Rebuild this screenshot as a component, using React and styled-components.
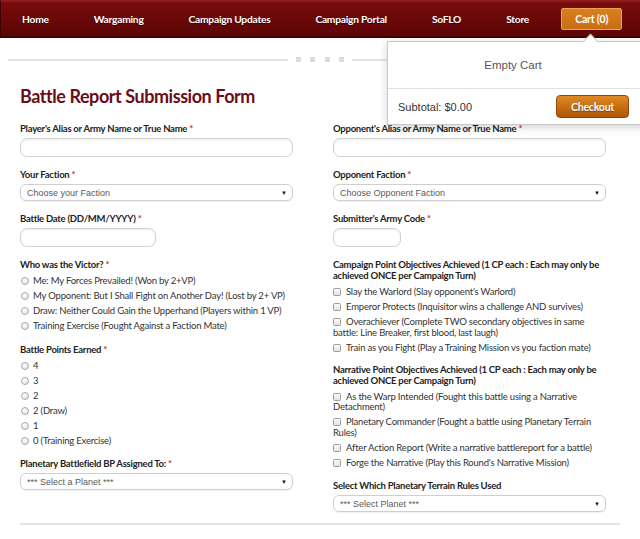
import React from "react";
import styled, { createGlobalStyle } from "styled-components";

const GlobalStyle = createGlobalStyle`
  html, body { margin: 0; padding: 0; background: #fff; }
  body { font-family: Lato, "Open Sans", sans-serif; color: #222; }
  * { box-sizing: border-box; }
`;

const navItems = ["Home", "Wargaming", "Campaign Updates", "Campaign Portal", "SoFLO", "Store"];

const victorOptions = [
  "Me: My Forces Prevailed! (Won by 2+VP)",
  "My Opponent: But I Shall Fight on Another Day! (Lost by 2+ VP)",
  "Draw: Neither Could Gain the Upperhand (Players within 1 VP)",
  "Training Exercise (Fought Against a Faction Mate)",
];

const pointOptions = ["4", "3", "2", "2 (Draw)", "1", "0 (Training Exercise)"];

const campaignObjectives = [
  "Slay the Warlord (Slay opponent's Warlord)",
  "Emperor Protects (Inquisitor wins a challenge AND survives)",
  "Overachiever (Complete TWO secondary objectives in same battle: Line Breaker, first blood, last laugh)",
  "Train as you Fight (Play a Training Mission vs you faction mate)",
];

const narrativeObjectives = [
  "As the Warp Intended (Fought this battle using a Narrative Detachment)",
  "Planetary Commander (Fought a battle using Planetary Terrain Rules)",
  "After Action Report (Write a narrative battlereport for a battle)",
  "Forge the Narrative (Play this Round's Narrative Mission)",
];

const Page = styled.div`
  position: relative;
  width: 640px;
  min-height: 539px;
  overflow: hidden;
`;

const NavBar = styled.nav`
  display: flex;
  align-items: center;
  height: 38px;
  padding-left: 21px;
  gap: 45px;
  background: linear-gradient(#7a0c0c, #680808 55%, #5c0505);
  border-top: 2px solid #8c1c1c;
  border-bottom: 2px solid #400202;
  border-left: 1px solid #3a0202;
`;

const NavLink = styled.a`
  color: #fff;
  font-weight: 700;
  font-size: 10.25px;
  letter-spacing: -0.25px;
  white-space: nowrap;
  text-decoration: none;
  text-shadow: 0 1px 1px rgba(0, 0, 0, 0.4);
`;

const CartButton = styled.a`
  display: flex;
  align-items: center;
  justify-content: center;
  flex-shrink: 0;
  height: 22px;
  width: 61px;
  margin-left: -13px;
  color: #fff;
  font-weight: 700;
  font-size: 10.5px;
  letter-spacing: -0.2px;
  white-space: nowrap;
  text-decoration: none;
  background: linear-gradient(#d9801f, #c96d13);
  border: 1px solid #e9a257;
  border-radius: 2px;
`;

const Divider = styled.div`
  display: flex;
  align-items: center;
  gap: 8px;
  margin-top: 19px;
  padding: 0 8px;
`;

const DividerLine = styled.div`
  flex: 1;
  height: 2px;
  background: #e2e2e2;
`;

const Squares = styled.div`
  display: flex;
  gap: 9.5px;
`;

const Square = styled.span`
  width: 5px;
  height: 5px;
  background: #dcdcdc;
`;

const CartPopup = styled.div`
  position: absolute;
  top: 41px;
  left: 387px;
  width: 264px;
  background: #fff;
  border: 1px solid #c8c8c8;
  box-shadow: 0 2px 8px rgba(0, 0, 0, 0.18);

  &::before {
    content: "";
    position: absolute;
    top: -6px;
    left: 197px;
    width: 10px;
    height: 10px;
    background: #fff;
    border-left: 1px solid #c8c8c8;
    border-top: 1px solid #c8c8c8;
    transform: rotate(45deg);
  }
`;

const CartEmpty = styled.div`
  display: flex;
  align-items: center;
  justify-content: center;
  height: 46px;
  padding-right: 12px;
  font-family: "Liberation Sans", Arial, sans-serif;
  font-size: 11.5px;
  color: #555;
`;

const CartFooter = styled.div`
  display: flex;
  align-items: center;
  justify-content: space-between;
  height: 36px;
  padding: 0 21px 0 10px;
  border-top: 1px solid #e0e0e0;
  font-family: "Liberation Sans", Arial, sans-serif;
  font-size: 11px;
  color: #333;
`;

const CheckoutButton = styled.button`
  width: 73px;
  height: 23px;
  padding: 0;
  color: #fff;
  font-family: Lato, sans-serif;
  font-weight: 700;
  font-size: 10.5px;
  letter-spacing: -0.2px;
  background: linear-gradient(#e08a24, #c56c12 55%, #ad5708);
  border: 1px solid #94460a;
  border-radius: 4px;
  text-shadow: 0 1px 1px rgba(0, 0, 0, 0.35);
`;

const Main = styled.main`
  padding: 0 20px;
`;

const Title = styled.h1`
  margin: 22px 0 15px;
  font-size: 18px;
  line-height: 24px;
  font-weight: 700;
  color: #6b0d18;
  letter-spacing: -0.45px;
`;

const FormGrid = styled.form`
  display: grid;
  grid-template-columns: 273px 273px;
  column-gap: 40px;
  align-items: start;
`;

const Column = styled.div`
  display: flex;
  flex-direction: column;
`;

const Field = styled.div`
  margin-bottom: ${(p) => (p.$last ? 0 : p.$gap ?? 12)}px;
`;

const Label = styled.div`
  margin-bottom: 4px;
  font-size: 9.5px;
  line-height: 11px;
  font-weight: 700;
  letter-spacing: -0.25px;
  color: #222;
`;

const Required = styled.span`
  color: #c0392b;
`;

const TextInput = styled.input`
  display: block;
  width: ${(p) => p.$w || 273}px;
  height: 19px;
  border: 1px solid #d2d2d2;
  border-radius: 7px;
  box-shadow: inset 0 1px 2px rgba(0, 0, 0, 0.07);
  background: #fff;
`;

const SelectBox = styled.div`
  display: flex;
  align-items: center;
  justify-content: space-between;
  width: 273px;
  height: 17px;
  padding: 0 5px 0 6px;
  border: 1px solid #cfcfcf;
  border-radius: 6px;
  box-shadow: 0 1px 1px rgba(0, 0, 0, 0.06);
  font-family: "Liberation Sans", Arial, sans-serif;
  font-size: 9px;
  color: #5a5a5a;
`;

const Arrow = styled.span`
  font-size: 6px;
  color: #111;
`;

const OptionList = styled.div`
  display: flex;
  flex-direction: column;
  gap: 4.5px;
  padding-top: 2px;
`;

const Option = styled.label`
  display: block;
  font-size: 9.5px;
  line-height: 10.5px;
  letter-spacing: -0.2px;
  color: #333;
`;

const Radio = styled.span`
  display: inline-block;
  width: 8px;
  height: 8px;
  margin: 0 4px 0 1px;
  vertical-align: -1px;
  border: 1px solid #aaa;
  border-radius: 50%;
  background: radial-gradient(circle at 40% 35%, #fff, #dcdcdc);
`;

const Check = styled.span`
  display: inline-block;
  width: 8px;
  height: 8px;
  margin-right: 5px;
  vertical-align: -1px;
  border: 1px solid #9c9c9c;
  border-radius: 1.5px;
  background: linear-gradient(#fbfbfb, #e2e2e2);
`;

const BottomRule = styled.hr`
  margin: 11px 0 0;
  border: 0;
  height: 2px;
  background: #e2e2e2;
`;

const Select = ({ text }) => (
  <SelectBox>
    <span>{text}</span>
    <Arrow>▼</Arrow>
  </SelectBox>
);

const FieldLabel = ({ children, required }) => (
  <Label>
    {children}
    {required && <Required> *</Required>}
  </Label>
);

export default function App() {
  return (
    <Page>
      <GlobalStyle />
      <NavBar>
        {navItems.map((item) => (
          <NavLink key={item}>{item}</NavLink>
        ))}
        <CartButton>Cart (0)</CartButton>
      </NavBar>

      <Divider>
        <DividerLine />
        <Squares>
          <Square />
          <Square />
          <Square />
          <Square />
        </Squares>
        <DividerLine />
      </Divider>

      <CartPopup>
        <CartEmpty>Empty Cart</CartEmpty>
        <CartFooter>
          <span>Subtotal: $0.00</span>
          <CheckoutButton>Checkout</CheckoutButton>
        </CartFooter>
      </CartPopup>

      <Main>
        <Title>Battle Report Submission Form</Title>
        <FormGrid>
          <Column>
            <Field>
              <FieldLabel required>Player's Alias or Army Name or True Name</FieldLabel>
              <TextInput />
            </Field>
            <Field>
              <FieldLabel required>Your Faction</FieldLabel>
              <Select text="Choose your Faction" />
            </Field>
            <Field>
              <FieldLabel required>Battle Date (DD/MM/YYYY)</FieldLabel>
              <TextInput $w={136} />
            </Field>
            <Field>
              <FieldLabel required>Who was the Victor?</FieldLabel>
              <OptionList>
                {victorOptions.map((o) => (
                  <Option key={o}><Radio />{o}</Option>
                ))}
              </OptionList>
            </Field>
            <Field>
              <FieldLabel required>Battle Points Earned</FieldLabel>
              <OptionList>
                {pointOptions.map((o) => (
                  <Option key={o}><Radio />{o}</Option>
                ))}
              </OptionList>
            </Field>
            <Field $last>
              <FieldLabel required>Planetary Battlefield BP Assigned To:</FieldLabel>
              <Select text="*** Select a Planet ***" />
            </Field>
          </Column>

          <Column>
            <Field>
              <FieldLabel required>Opponent's Alias or Army Name or True Name</FieldLabel>
              <TextInput />
            </Field>
            <Field>
              <FieldLabel required>Opponent Faction</FieldLabel>
              <Select text="Choose Opponent Faction" />
            </Field>
            <Field>
              <FieldLabel required>Submitter's Army Code</FieldLabel>
              <TextInput $w={68} />
            </Field>
            <Field $gap={10.5}>
              <FieldLabel>Campaign Point Objectives Achieved (1 CP each : Each may only be achieved ONCE per Campaign Turn)</FieldLabel>
              <OptionList>
                {campaignObjectives.map((o) => (
                  <Option key={o}><Check />{o}</Option>
                ))}
              </OptionList>
            </Field>
            <Field>
              <FieldLabel>Narrative Point Objectives Achieved (1 CP each : Each may only be achieved ONCE per Campaign Turn)</FieldLabel>
              <OptionList>
                {narrativeObjectives.map((o) => (
                  <Option key={o}><Check />{o}</Option>
                ))}
              </OptionList>
            </Field>
            <Field $last>
              <FieldLabel>Select Which Planetary Terrain Rules Used</FieldLabel>
              <Select text="*** Select Planet ***" />
            </Field>
          </Column>
        </FormGrid>
        <BottomRule />
      </Main>
    </Page>
  );
}
